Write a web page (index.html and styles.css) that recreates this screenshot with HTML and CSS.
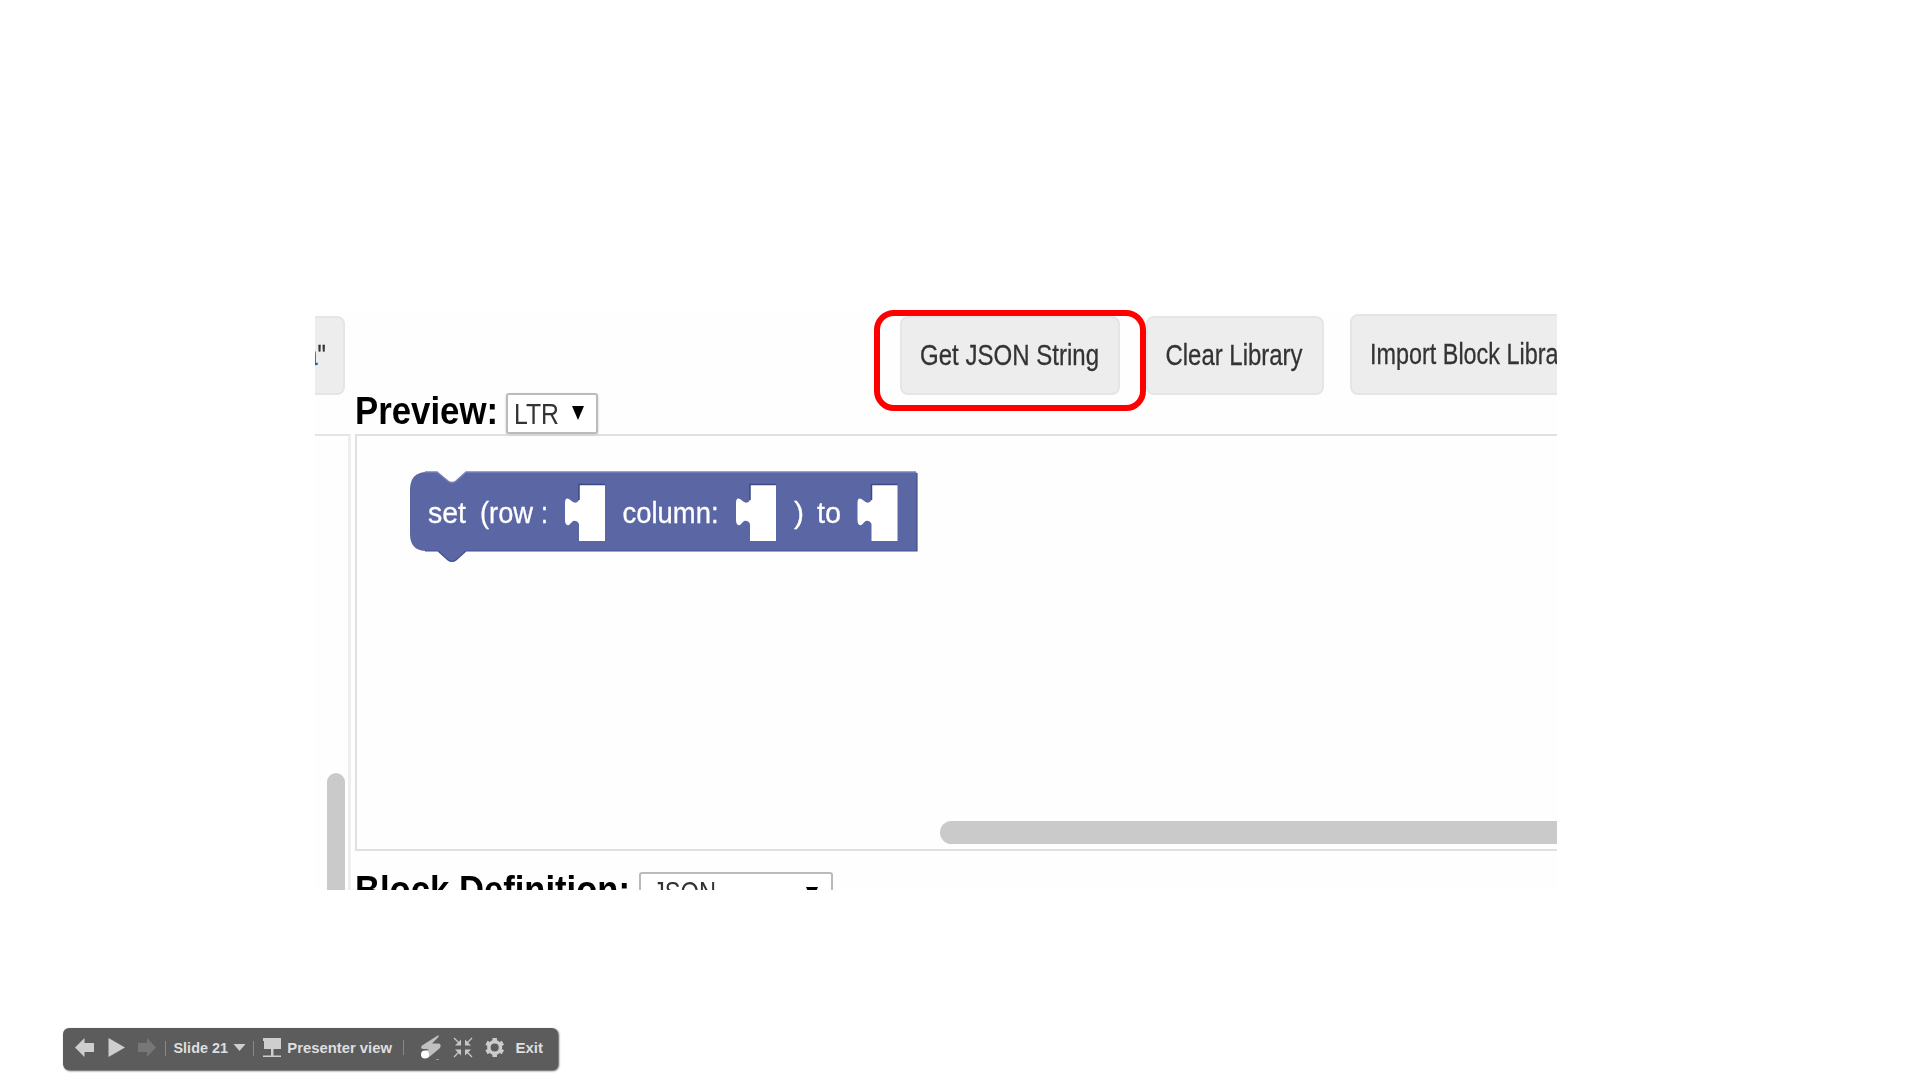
FILE: index.html
```html
<!DOCTYPE html>
<html lang="en">
<head>
<meta charset="utf-8">
<title>Slide 21</title>
<link rel="stylesheet" href="styles.css">
</head>
<body>
<main class="slide">
  <section class="capture">
    <header class="actions">
      <div class="button button-cut"><svg class="label" width="14" height="79"><text x="-10.500" y="49" textLength="21.500" lengthAdjust="spacingAndGlyphs"><tspan fill="#246fc0">a</tspan>"</text></svg></div>
      <div class="button button-json"><svg class="label" width="182" height="79"><text x="0" y="49" textLength="179" lengthAdjust="spacingAndGlyphs">Get JSON String</text></svg></div>
      <div class="button button-clear"><svg class="label" width="140" height="79"><text x="0.500" y="49" textLength="137" lengthAdjust="spacingAndGlyphs">Clear Library</text></svg></div>
      <div class="button button-import"><svg class="label" width="220" height="79"><text x="0" y="49.500" textLength="208" lengthAdjust="spacingAndGlyphs">Import Block Library</text></svg></div>
    </header>
    <div class="workspace">
      <aside class="side"><div class="side-scroll"></div></aside>
      <div class="main">
        <div class="heading">
          <svg class="label title" width="148" height="41"><text x="-1" y="30.500" textLength="143" lengthAdjust="spacingAndGlyphs">Preview:</text></svg>
          <div class="select select-dir">
            <svg class="label" width="50" height="37"><text x="0" y="30.500" textLength="45" lengthAdjust="spacingAndGlyphs">LTR</text></svg>
            <svg class="arrow" width="12" height="14" viewBox="0 0 12 14"><path d="M0 0H12L6 14Z"/></svg>
          </div>
        </div>
        <div class="preview">
          <svg class="block" width="511" height="94" viewBox="408 469 511 94">
            <path d="M425 472H437L448 481Q452 484 456 481L466 472H915Q917 472 917 474V551H466L456 560Q452 563 448 560L438 551H425Q410 550 410 534V488Q411 473 425 472Z" fill="#5b67a5"/>
            <path d="M425 472H437L448 481Q452 484 456 481L466 472H916" fill="none" stroke="#7983b9" stroke-width="1.400"/>
            <path d="M917 473V551H466L456 560Q452 563 448 560L438 551H425" fill="none" stroke="#434e8d" stroke-width="1.200"/>
            <g fill="#fff">
              <path d="M579 485H605V541H579V524Q577 520 573 521L569 525Q565 526 565 520V503Q565 497 569 499L573 502Q577 504 579 500Z"/>
              <path transform="translate(171 0)" d="M579 485H605V541H579V524Q577 520 573 521L569 525Q565 526 565 520V503Q565 497 569 499L573 502Q577 504 579 500Z"/>
              <path transform="translate(292.500 0)" d="M579 485H605V541H579V524Q577 520 573 521L569 525Q565 526 565 520V503Q565 497 569 499L573 502Q577 504 579 500Z"/>
            </g>
            <path d="M605 484.500H579V500M776 484.500H750V500M897.500 484.500H871.500V500" fill="none" stroke="#3e4884" stroke-width="1.500"/>
            <g class="block-text">
              <text x="428" y="522.500" textLength="38" lengthAdjust="spacingAndGlyphs">set</text>
              <text x="480" y="522.500" textLength="53" lengthAdjust="spacingAndGlyphs">(row</text>
              <text x="541" y="522.500" textLength="7" lengthAdjust="spacingAndGlyphs">:</text>
              <text x="622.500" y="522.500" textLength="96" lengthAdjust="spacingAndGlyphs">column:</text>
              <text x="794" y="522.500" textLength="10" lengthAdjust="spacingAndGlyphs">)</text>
              <text x="817" y="522.500" textLength="24" lengthAdjust="spacingAndGlyphs">to</text>
            </g>
          </svg>
          <div class="preview-scroll"></div>
        </div>
        <div class="heading definition">
          <svg class="label title" width="280" height="41"><text x="-1" y="31" textLength="275" lengthAdjust="spacingAndGlyphs">Block Definition:</text></svg>
          <div class="select select-format">
            <svg class="label" width="70" height="37"><text x="0" y="30" textLength="63" lengthAdjust="spacingAndGlyphs">JSON</text></svg>
            <svg class="arrow" width="12" height="14" viewBox="0 0 12 14"><path d="M0 0H12L6 14Z"/></svg>
          </div>
        </div>
      </div>
    </div>
  </section>
  <div class="highlight"></div>
  <nav class="toolbar">
    <svg class="tools" width="495" height="42" viewBox="63 1028 495 42">
      <g fill="#cecece">
        <path d="M75 1047.500L84.500 1038V1043H94V1052H84.500V1057Z"/>
        <path d="M108.500 1038V1057L125 1047.500Z"/>
        <path fill="#777" d="M156 1047.500L147 1038V1043H138V1052H147V1057Z"/>
        <path d="M233.500 1044H245.500L239.500 1051Z"/>
        <path d="M263 1038H281V1049H273.500V1055.500H281V1057H263V1055.500H271V1049H264V1041H263Z"/>
      </g>
      <path d="M165.500 1041V1056M253.500 1041V1056M403.500 1040V1055" stroke="#888"/>
      <path d="M438.500 1035L422 1045.500Q419.500 1049 424 1049H429L421.500 1053L428 1058L440 1048Q442 1043.500 438 1043.500H432L438.500 1037Z" fill="#c0c0c0"/>
      <circle cx="425" cy="1054.500" r="4" fill="#fff"/>
      <path d="M436 1059.500H439" stroke="#999"/>
      <g stroke="#c8c8c8" stroke-width="1.300" fill="#c8c8c8">
        <path d="M454 1038L459 1043M472 1038L467 1043M454 1057L459 1052M472 1057L467 1052"/>
        <path stroke="none" d="M461 1039.500V1045.500H455ZM465 1039.500V1045.500H471ZM461 1055.500V1049.500H455ZM465 1055.500V1049.500H471Z"/>
      </g>
      <circle cx="494.700" cy="1047.500" r="5.800" fill="none" stroke="#ccc" stroke-width="3.500"/>
      <path d="M494.700 1038V1041M494.700 1054V1057M486.500 1042.800L489 1044.200M500.400 1050.800L502.900 1052.200M486.500 1052.200L489 1050.800M500.400 1044.200L502.900 1042.800" stroke="#ccc" stroke-width="4.500"/>
      <g class="tool-text">
        <text x="173.500" y="1053" textLength="54.500" lengthAdjust="spacingAndGlyphs">Slide 21</text>
        <text x="287.300" y="1053.300" textLength="104.700" lengthAdjust="spacingAndGlyphs">Presenter view</text>
        <text x="515.500" y="1052.700" textLength="27.500" lengthAdjust="spacingAndGlyphs">Exit</text>
      </g>
    </svg>
  </nav>
</main>
</body>
</html>
```
FILE: styles.css
```css
* { box-sizing: border-box; }
body { margin: 0; background: #fff; font-family: "Liberation Sans", Arial, sans-serif; }
svg { display: block; flex: none; }
.slide { position: relative; width: 1920px; height: 1080px; padding: 312px 0 0 315px; overflow: hidden; }
.capture { width: 1242px; height: 578px; overflow: hidden; background: #fefefe; }
.actions { display: flex; align-items: flex-end; height: 83px; }
.button { display: flex; flex: none; height: 79px; background: #ededed; border: 2px solid #e5e5e5; border-radius: 8px; }
.label { margin-top: -2px; overflow: visible; font-size: 30px; fill: #333; stroke: #333; stroke-width: .3px; filter: blur(.6px); }
.button-cut { width: 30px; border-left: 0; border-radius: 0 8px 8px 0; }
.button-cut .label { overflow: hidden; }
.button-json { width: 220px; margin-left: 555px; padding-left: 18px; }
.button-clear { width: 178px; margin-left: 26px; padding-left: 17px; }
.button-import { width: 260px; height: 81px; margin-left: 26px; padding-left: 18px; }
.workspace { display: flex; height: 540px; margin-top: -2px; }
.side { display: flex; flex: none; justify-content: flex-end; align-items: flex-end; width: 36px; height: 497px; margin-top: 41px; border-top: 2px solid #e4e4e4; border-right: 3px solid #eee; padding-right: 3px; }
.side-scroll { flex: none; width: 18px; height: 158px; border-radius: 9px 9px 0 0; background: #cacaca; }
.main { flex: 1; min-width: 0; margin-left: 4px; }
.heading { display: flex; height: 41px; padding-left: 1px; }
.title { margin: 0; font-size: 38px; font-weight: bold; fill: #000; stroke: none; }
.select { display: flex; align-items: flex-start; flex: none; background: #fff; border: 2px solid #bbb; border-radius: 3px; height: 41px; }
.select-dir { position: relative; z-index: 1; width: 92px; margin-left: 2px; padding-left: 6px; filter: drop-shadow(0 1px 1px #ccc); }
.select .label { stroke: none; }
.arrow { margin-top: 11px; filter: blur(.4px); }
.select-dir .arrow { margin-left: 8px; }
.preview { display: flex; flex-direction: column; height: 417px; border: solid #e0e0e0; border-width: 2px 0 2px 2px; }
.block { margin: 33px 0 0 51px; filter: blur(.6px); }
.block-text { font-size: 30px; fill: #fff; stroke: #fff; stroke-width: .3px; }
.preview-scroll { height: 23px; width: 640px; margin: auto 0 5px 583px; border-radius: 12px; background: #cacaca; flex: none; }
.definition { padding-top: 21px; }
.select-format { width: 194px; margin-left: 3px; padding-left: 12px; }
.select-format .arrow { margin: 13px 0 0 83px; }
.highlight { position: absolute; left: 874px; top: 310px; width: 272px; height: 101px; border: 6px solid #f00; border-radius: 20px; }
.toolbar { position: absolute; left: 63px; top: 1028px; width: 495px; height: 42px; border-radius: 6px; background: #5c5c5c; box-shadow: 1px 1px 2px #555; }
.tool-text { font-size: 14.600px; font-weight: bold; fill: #dedede; }
```
